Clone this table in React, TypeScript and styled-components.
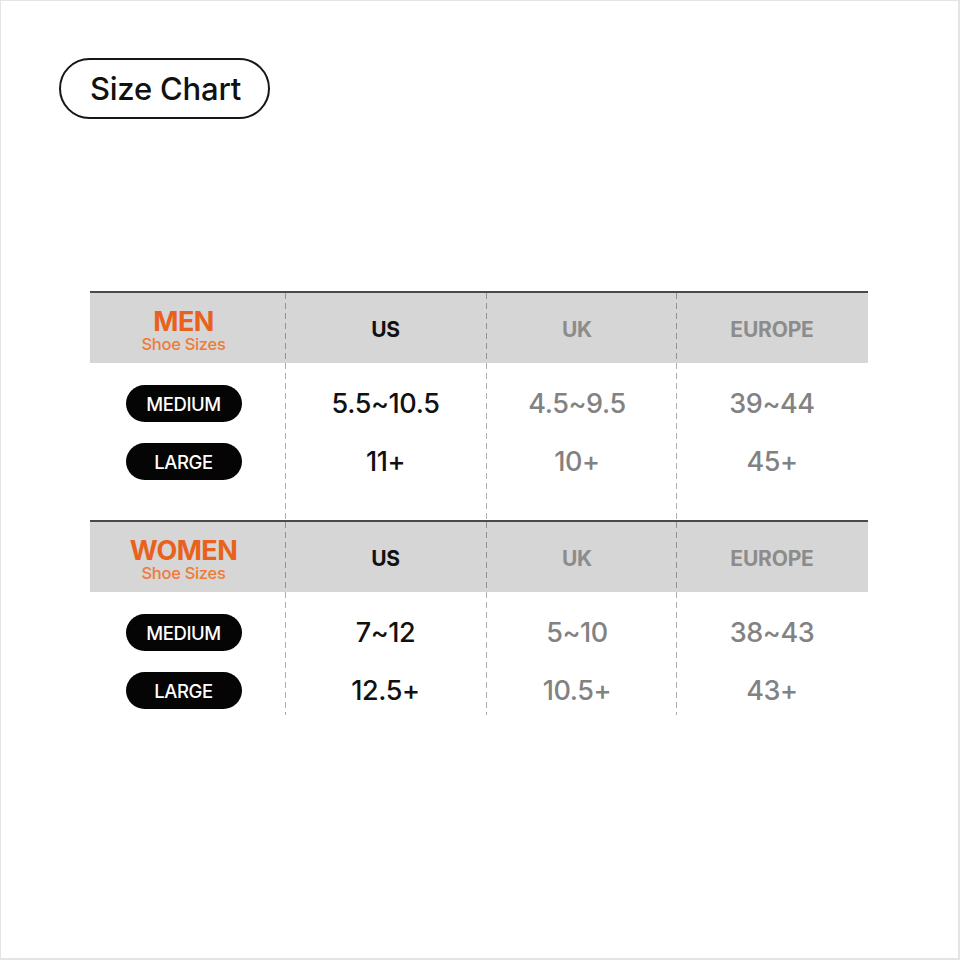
import React from "react";
import styled, { createGlobalStyle } from "styled-components";

const Global = createGlobalStyle`
  html, body { margin: 0; padding: 0; background: #ffffff; }
  body { font-family: Inter, "Noto Sans", sans-serif; }
`;

const Page = styled.div`
  box-sizing: border-box;
  width: 960px;
  height: 960px;
  border: 1px solid #e4e4e4;
  border-right-width: 2px;
  border-bottom-width: 2px;
  padding: 57px 0 0 58px;
  background: #fff;
`;

const TitlePill = styled.div`
  box-sizing: border-box;
  width: 211px;
  height: 61px;
  border: 2px solid #161616;
  border-radius: 31px;
  display: flex;
  align-items: center;
  justify-content: center;
  font-size: 31px;
  font-weight: 500;
  color: #111;
  letter-spacing: -0.2px;
  padding-left: 2px;
`;

const Table = styled.div`
  width: 778px;
  margin: 172px 0 0 31px;
  display: flex;
  flex-direction: column;
`;

const Section = styled.div`
  display: flex;
  border-top: 2px solid #4a4a4a;
`;

const Column = styled.div<{ $width: number; $divider?: boolean; $shift?: number }>`
  position: relative;
  width: ${(p) => p.$width}px;
  display: flex;
  flex-direction: column;
  & > * > * {
    margin-right: ${(p) => p.$shift ?? 0}px;
  }
  &::before {
    content: "";
    display: ${(p) => (p.$divider ? "block" : "none")};
    position: absolute;
    left: 0;
    top: 0;
    bottom: 0;
    width: 1px;
    background-image: linear-gradient(to bottom, rgba(0, 0, 0, 0.32) 60%, transparent 60%);
    background-size: 1px 10px;
    background-repeat: repeat-y;
    z-index: 1;
  }
`;

const HeaderCell = styled.div`
  height: 70px;
  background: #d6d6d6;
  display: flex;
  flex-direction: column;
  align-items: center;
  justify-content: center;
`;

const HeaderText = styled.div<{ $muted?: boolean }>`
  font-size: 21px;
  font-weight: 700;
  color: ${(p) => (p.$muted ? "#8c8c8c" : "#111")};
  letter-spacing: -0.2px;
  margin-top: 2px;
`;

const GroupTitle = styled.div`
  font-size: 27px;
  font-weight: 700;
  line-height: 27px;
  color: #e8621d;
  letter-spacing: -0.6px;
  margin-top: 4px;
`;

const GroupSub = styled.div`
  font-size: 16.5px;
  font-weight: 500;
  line-height: 18px;
  color: #ee7b38;
  letter-spacing: -0.3px;
`;

const Body = styled.div<{ $bottom: number }>`
  display: flex;
  flex-direction: column;
  gap: 21px;
  padding: 22px 0 ${(p) => p.$bottom}px;
`;

const ValueCell = styled.div<{ $muted?: boolean }>`
  height: 37px;
  display: flex;
  align-items: center;
  justify-content: center;
  font-size: 27px;
  font-weight: 500;
  letter-spacing: -0.4px;
  color: ${(p) => (p.$muted ? "#828282" : "#111")};
`;

const SizeWrap = styled.div`
  height: 37px;
  display: flex;
  justify-content: center;
`;

const SizePill = styled.div`
  width: 116px;
  height: 37px;
  border-radius: 19px;
  background: #050505;
  color: #fff;
  display: flex;
  align-items: center;
  justify-content: center;
  font-size: 18.5px;
  font-weight: 500;
  letter-spacing: -0.4px;
`;

type Group = {
  title: string;
  bottom: number;
  rows: { size: string; us: string; uk: string; eu: string }[];
};

const groups: Group[] = [
  {
    title: "MEN",
    bottom: 40,
    rows: [
      { size: "MEDIUM", us: "5.5~10.5", uk: "4.5~9.5", eu: "39~44" },
      { size: "LARGE", us: "11+", uk: "10+", eu: "45+" },
    ],
  },
  {
    title: "WOMEN",
    bottom: 6,
    rows: [
      { size: "MEDIUM", us: "7~12", uk: "5~10", eu: "38~43" },
      { size: "LARGE", us: "12.5+", uk: "10.5+", eu: "43+" },
    ],
  },
];

const cols: { key: "us" | "uk" | "eu"; label: string; width: number; muted: boolean; shift: number }[] = [
  { key: "us", label: "US", width: 201, muted: false, shift: 0 },
  { key: "uk", label: "UK", width: 190, muted: true, shift: 8 },
  { key: "eu", label: "EUROPE", width: 192, muted: true, shift: 0 },
];

export default function App() {
  return (
    <>
      <Global />
      <Page>
        <TitlePill>Size Chart</TitlePill>
        <Table>
          {groups.map((g) => (
            <Section key={g.title}>
              <Column $width={195} $shift={8}>
                <HeaderCell>
                  <GroupTitle>{g.title}</GroupTitle>
                  <GroupSub>Shoe Sizes</GroupSub>
                </HeaderCell>
                <Body $bottom={g.bottom}>
                  {g.rows.map((r) => (
                    <SizeWrap key={r.size}>
                      <SizePill>{r.size}</SizePill>
                    </SizeWrap>
                  ))}
                </Body>
              </Column>
              {cols.map((c) => (
                <Column key={c.key} $width={c.width} $divider $shift={c.shift}>
                  <HeaderCell>
                    <HeaderText $muted={c.muted}>{c.label}</HeaderText>
                  </HeaderCell>
                  <Body $bottom={g.bottom}>
                    {g.rows.map((r) => (
                      <ValueCell key={r.size} $muted={c.muted}>
                        {r[c.key]}
                      </ValueCell>
                    ))}
                  </Body>
                </Column>
              ))}
            </Section>
          ))}
        </Table>
      </Page>
    </>
  );
}
